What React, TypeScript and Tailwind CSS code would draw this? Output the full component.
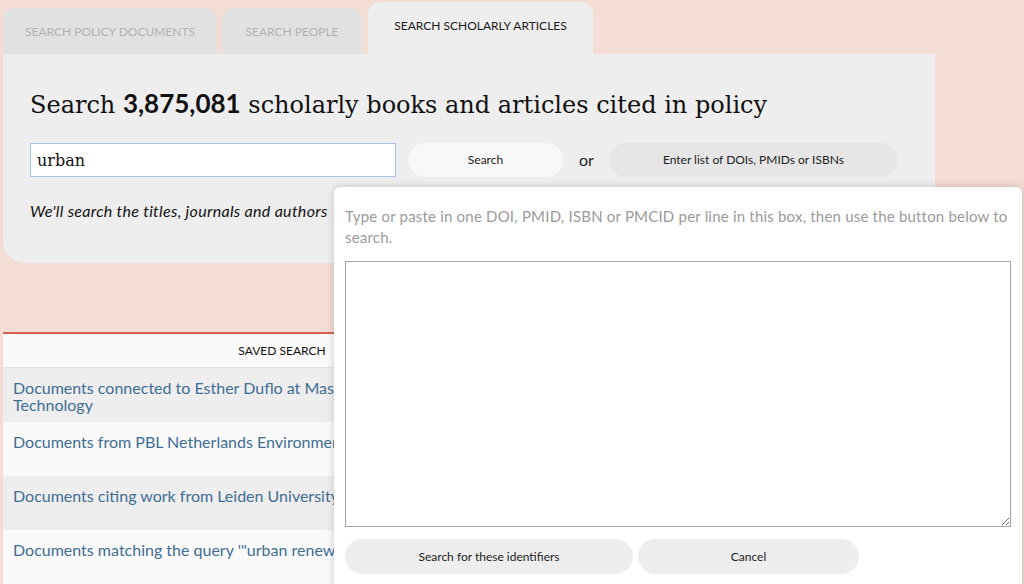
import React from 'react';

const sans = "font-['Lato','Open_Sans',sans-serif]";
const serif = "font-['DejaVu_Serif','Liberation_Serif',serif]";

const savedSearches = [
  { text: 'Documents connected to Esther Duflo at Massachusetts Institute of Technology', shaded: true },
  { text: 'Documents from PBL Netherlands Environmental Assessment Agency', shaded: false },
  { text: 'Documents citing work from Leiden University', shaded: true },
  { text: 'Documents matching the query \'"urban renewal"\'', shaded: false },
];

export default function App() {
  return (
    <div className={`relative h-[584px] w-[1024px] overflow-hidden bg-[#f3ddd5] ${sans}`}>
      <div className="pl-[3px] pt-[2px]">
        {/* Tabs */}
        <div className="flex h-[52px] items-end">
          <div className="flex h-[46px] w-[214px] justify-center rounded-t-[12px] bg-[#e1e1e1] pt-[15px] text-[12px] text-[#b3b3b3]">
            SEARCH POLICY DOCUMENTS
          </div>
          <div className="ml-[5px] flex h-[46px] w-[140px] justify-center rounded-t-[12px] bg-[#e1e1e1] pt-[15px] text-[12px] text-[#b3b3b3]">
            SEARCH PEOPLE
          </div>
          <div className="ml-[6px] flex h-[52px] w-[225px] justify-center rounded-t-[12px] bg-[#eeeeee] pt-[15px] text-[12px] text-[#1a1a1a]">
            SEARCH SCHOLARLY ARTICLES
          </div>
        </div>

        {/* Search panel */}
        <div className="h-[209px] w-[932px] rounded-b-[22px] rounded-tr-none bg-[#eeeeee] pl-[27px] pt-[32px]">
          <h1 className={`${serif} text-[24px] leading-[34px] text-[#111111]`}>
            Search <span className={`${sans} text-[26px] font-bold`}>3,875,081</span> scholarly books and articles cited in policy
          </h1>
          <div className="mt-[21px] flex items-center">
            <input
              defaultValue="urban"
              className={`${serif} h-[34px] w-[366px] border border-[#a9c4e6] bg-white px-[6px] text-[16px] text-[#111111] outline-none`}
            />
            <button className="ml-[12px] h-[34px] w-[155px] rounded-full bg-[#f8f8f8] text-[12px] text-[#222222]">
              Search
            </button>
            <span className="ml-[16px] text-[16px] text-[#222222]">or</span>
            <button className="ml-[15px] h-[34px] w-[289px] rounded-full bg-[#e6e6e6] text-[12px] text-[#222222]">
              Enter list of DOIs, PMIDs or ISBNs
            </button>
          </div>
          <p className="mt-[22px] text-[16px] italic tracking-[0.3px] text-[#111111]">
            We'll search the titles, journals and authors
          </p>
        </div>
      </div>

      {/* Saved searches table */}
      <div className="ml-[3px] mt-[69px] w-[932px] border-t-[2px] border-[#d4604f] bg-[#fafafa]">
        <div className="flex h-[34px] items-center border-b border-[#e2e2e2]">
          <div className="w-[558px] text-center text-[12px] text-[#111111]">SAVED SEARCH</div>
        </div>
        {savedSearches.map((s, i) => (
          <div
            key={i}
            className={`h-[54px] px-[10px] pt-[11px] text-[16px] leading-[17px] text-[#3f6d94] ${
              s.shaded ? 'bg-[#eeeeee]' : 'bg-[#fafafa]'
            }`}
          >
            <div className="w-[520px]">{s.text}</div>
          </div>
        ))}
      </div>

      {/* Identifier list popup */}
      <div className="absolute left-[334px] top-[187px] h-[410px] w-[688px] rounded-t-[6px] bg-white px-[11px] pt-[19px] shadow-[0_0_8px_rgba(0,0,0,0.18)]">
        <p className="text-[15px] leading-[21px] tracking-[0.2px] text-[#9a9a9a]">
          Type or paste in one DOI, PMID, ISBN or PMCID per line in this box, then use the button below to search.
        </p>
        <textarea className="mt-[13px] block h-[266px] w-[666px] border border-[#a3a3a3] bg-white outline-none" />
        <div className="mt-[12px] flex gap-[5px]">
          <button className="h-[35px] w-[288px] rounded-full bg-[#eeeeee] text-[12px] text-[#222222]">
            Search for these identifiers
          </button>
          <button className="h-[35px] w-[221px] rounded-full bg-[#eeeeee] text-[12px] text-[#222222]">
            Cancel
          </button>
        </div>
      </div>
    </div>
  );
}
